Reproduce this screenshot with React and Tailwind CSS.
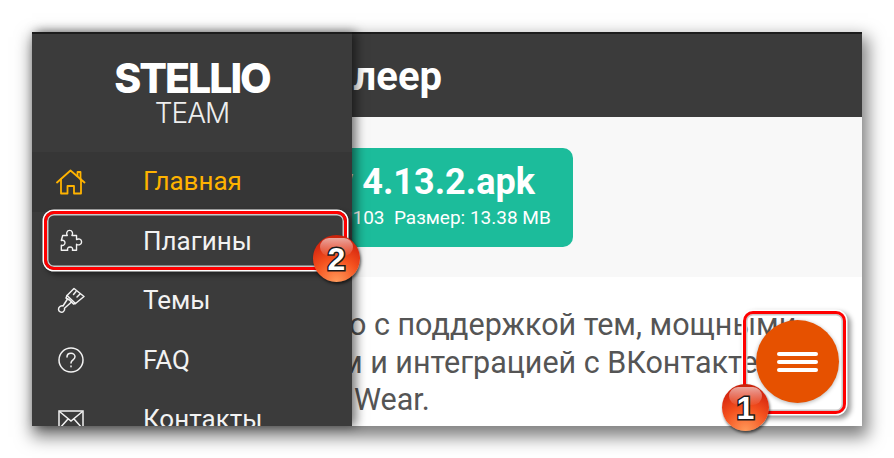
import React from "react";

const roboto = "font-['Roboto',sans-serif]";

function HomeIcon() {
  return (
    <svg width="30" height="26" viewBox="0 0 30 26" fill="none" stroke="currentColor" strokeWidth="1.8" strokeLinejoin="round" strokeLinecap="round">
      <path d="M1 13.500 14.500 1.500l14 12" />
      <path d="M21.500 7V3h3v7.500" />
      <path d="M5 10.500V24.500h6.500v-7.500h6.500v7.500h7V10.500" />
    </svg>
  );
}

function PuzzleIcon() {
  return (
    <svg width="24" height="24" viewBox="0 0 26 26" fill="none" stroke="currentColor" strokeWidth="1.500" strokeLinejoin="round">
      <path d="M4 7h5c-1.500-2-.5-5.500 2.500-5.500S15.500 5 14 7h5v4.500c2-1.500 5.500-.5 5.500 2.500S21 18 19 16.500V23h-4.500c1-2-.5-3.500-2.500-3.500S8.500 21 9.500 23H2.500v-5.500c2 1 4-.5 4-2.500s-2-3.500-4-2.500z" />
    </svg>
  );
}

function BrushIcon() {
  return (
    <svg width="28" height="27" viewBox="0 0 28 27" fill="none" stroke="currentColor" strokeWidth="1.500" strokeLinejoin="round" strokeLinecap="round">
      <path d="M17 1.500 27 9.500l-8.500 7-8.500-8z" />
      <path d="M19 4.500 16.500 7.500M23 7 20 10" />
      <path d="M10 8.500 9 11l3.500 2 4 4 2-.5" />
      <path d="M10.500 12 6 19c-1.500-.5-4.500.5-4.500 3.200 0 2.300 3 4 5 2.300 1.200-1 1.300-2.300 1-3.300L14.500 15" />
    </svg>
  );
}

function HelpIcon() {
  return (
    <svg width="26" height="26" viewBox="0 0 26 26" fill="none" stroke="currentColor" strokeWidth="1.500" strokeLinecap="round">
      <circle cx="13" cy="13" r="12" />
      <path d="M9 10c0-2.300 1.800-3.700 4-3.700s4 1.500 4 3.500c0 3-4 3-4 6.200" />
      <path d="M13 19v.8" />
    </svg>
  );
}

function MailIcon() {
  return (
    <svg width="26" height="20" viewBox="0 0 26 20" fill="none" stroke="currentColor" strokeWidth="1.500">
      <rect x="1" y="1" width="24" height="18" />
      <path d="M1.500 1.500 13 11 24.500 1.500M1.500 18.500l8.500-9.500M24.500 18.500 16 9" />
    </svg>
  );
}

const menu = [
  { name: "Главная", icon: HomeIcon, active: true },
  { name: "Плагины", icon: PuzzleIcon },
  { name: "Темы", icon: BrushIcon },
  { name: "FAQ", icon: HelpIcon },
  { name: "Контакты", icon: MailIcon },
];

function Badge({ n, className }) {
  return (
    <div className={`absolute w-[47px] h-[47px] rounded-full flex items-center justify-center overflow-hidden bg-[radial-gradient(circle_at_50%_100%,#ff9a5a_0%,#f4511e_45%,#d92a10_75%,#b81c08_100%)] shadow-[1px_2px_3px_rgba(0,0,0,0.6)] ${className}`}>
      <div className="absolute left-[7px] top-[3px] w-[33px] h-[18px] rounded-full bg-gradient-to-b from-white/60 to-white/5" />
      <span className="relative font-['Liberation_Sans',sans-serif] font-bold text-[32px] leading-none text-white [-webkit-text-stroke:3px_#1a1a1a] [paint-order:stroke_fill]">{n}</span>
    </div>
  );
}

function Frame({ className }) {
  return (
    <div className={`absolute rounded-[10px] border-[3px] border-[#f00] shadow-[0_0_0_1.5px_#fff,inset_0_0_0_1.5px_#c8c8c8,3px_3px_5px_2px_rgba(0,0,0,0.4)] ${className}`} />
  );
}

export default function App() {
  return (
    <div className={`w-[894px] h-[458px] bg-white pt-8 pl-8 ${roboto}`}>
      <div className="relative w-[830px] h-[394px] shadow-[3px_8px_16px_3px_rgba(0,0,0,0.5)]">
        <div className="w-full h-full overflow-hidden bg-white">
          {/* Page behind the drawer */}
          <header className="h-[85px] bg-[#3b3b3b] border-t-2 border-[#1c1c1c] flex items-center justify-end pr-[420px] pt-[2px]">
            <span className="text-[40px] font-bold text-white whitespace-nowrap">Плеер</span>
          </header>
          <section className="h-[160px] bg-[#f8f8f8] pt-[31px] flex justify-end pr-[289px]">
            <div className="w-[276px] h-[99px] rounded-[10px] bg-[#1cbc9b] text-white flex flex-col items-center pt-[10px]">
              <div className="text-[36px] leading-[48px] font-bold whitespace-nowrap">v 4.13.2.apk</div>
              <div className="mr-10 text-[19px] leading-[24px] whitespace-nowrap">Версия: 103&nbsp; Размер: 13.38 MB</div>
            </div>
          </section>
          <section className="pt-[29px] text-[30.5px] leading-[37.5px] text-[#555] whitespace-nowrap">
            <div className="pl-[317px]">о с поддержкой тем, мощными</div>
            <div className="pl-[308px]">м и интеграцией с ВКонтакте</div>
            <div className="pl-[322px]">Wear.</div>
          </section>
        </div>

        {/* Drawer */}
        <aside className="absolute left-0 top-0 bottom-0 w-[320px] overflow-hidden bg-[#3b3b3b] border-t-2 border-[#1c1c1c] shadow-[4px_0_10px_rgba(0,0,0,0.55)]">
          <div className="h-[118px] flex flex-col items-center pt-[23px] text-white">
            <div className="font-['Inter',sans-serif] text-[41px] leading-[42px] font-extrabold tracking-[-2px]">STELLIO</div>
            <div className="font-['Inter',sans-serif] text-[28px] leading-[28px] font-light tracking-[-1px] text-[#eee]">TEAM</div>
          </div>
          {menu.map((item) => {
            const Icon = item.icon;
            return (
              <div
                key={item.name}
                className={`h-[59.5px] flex items-center text-[26px] ${item.active ? "bg-[#363636] text-[#ffb300]" : "text-[#f2f2f2]"}`}
              >
                <div className="w-[111px] pl-6">
                  <div className="w-[30px] flex justify-center">
                    <Icon />
                  </div>
                </div>
                <span className="whitespace-nowrap">{item.name}</span>
              </div>
            );
          })}
        </aside>

        {/* FAB */}
        <div className="absolute left-[724px] top-[288px] w-[83px] h-[83px] rounded-full bg-[#e65100] flex flex-col items-center justify-center gap-1 shadow-[0_1px_4px_rgba(0,0,0,0.3)]">
          <div className="w-[41px] h-1 rounded-full bg-white" />
          <div className="w-[41px] h-1 rounded-full bg-white" />
          <div className="w-[41px] h-1 rounded-full bg-white" />
        </div>

        {/* Annotations */}
        <Frame className="left-[12px] top-[179px] w-[303px] h-[59px]" />
        <Frame className="left-[711px] top-[279px] w-[103px] h-[103px]" />
        <Badge n="2" className="left-[281px] top-[203px]" />
        <Badge n="1" className="left-[690px] top-[352px]" />
      </div>
    </div>
  );
}
